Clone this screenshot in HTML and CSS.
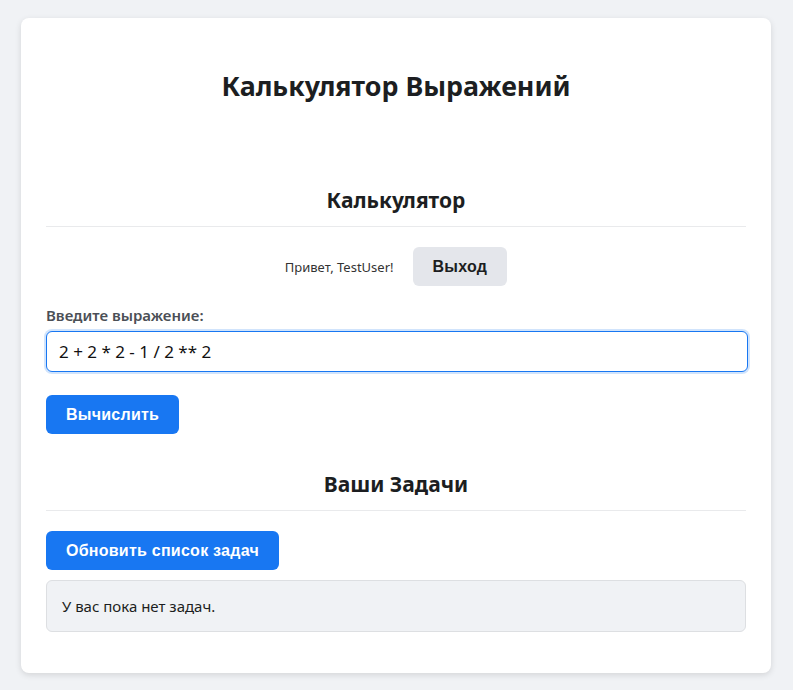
FILE: index.html
```html
<!DOCTYPE html>
<html lang="ru">
<head>
<meta charset="utf-8">
<title>Калькулятор Выражений</title>
<link rel="stylesheet" href="styles.css">
</head>
<body>
<div class="card">
  <h1 class="title">Калькулятор Выражений</h1>
  <section class="section">
    <h2 class="section-title">Калькулятор</h2>
    <div class="user-row">
      <span class="greeting">Привет, TestUser!</span>
      <button class="btn btn-secondary">Выход</button>
    </div>
    <label class="label" for="expr">Введите выражение:</label>
    <input id="expr" class="input" type="text" value="2 + 2 * 2 - 1 / 2 ** 2">
    <button class="btn btn-primary">Вычислить</button>
  </section>
  <section class="section">
    <h2 class="section-title">Ваши Задачи</h2>
    <button class="btn btn-primary">Обновить список задач</button>
    <div class="tasks">У вас пока нет задач.</div>
  </section>
</div>
</body>
</html>
```
FILE: styles.css
```css
* { box-sizing: border-box; }
html, body { margin: 0; padding: 0; }
body {
  background: #f0f2f5;
  font-family: "Noto Sans", "Open Sans", sans-serif;
  color: #1c1e21;
  padding: 18px 1px 18px 0;
}
.card {
  width: 750px;
  margin: 0 auto;
  background: #fff;
  border-radius: 8px;
  box-shadow: 0 2px 6px rgba(0,0,0,0.12);
  padding: 25px 25px 41px;
}
.title {
  font-size: 26.8px;
  font-weight: 700;
  text-align: center;
  margin: 25px 0 82px;
  line-height: 36px;
}
.section-title {
  font-size: 21px;
  font-weight: 700;
  text-align: center;
  margin: 0 0 20px;
  padding-bottom: 12px;
  line-height: 28px;
  border-bottom: 1px solid #e9eaec;
}
.user-row {
  display: flex;
  justify-content: center;
  align-items: center;
  gap: 19px;
  margin-bottom: 19px;
}
.greeting { font-size: 13px; color: #333; }
.btn {
  font-family: "Liberation Sans", Arial, sans-serif;
  font-weight: 700;
  font-size: 16px;
  letter-spacing: 0.25px;
  border: none;
  border-radius: 6px;
  padding: 0 20px;
  height: 39px;
  cursor: pointer;
}
.btn-secondary { background: #e4e6eb; color: #1c1e21; }
.btn-primary { background: #1877f2; color: #fff; }
.label {
  display: block;
  font-size: 15px;
  font-weight: 600;
  color: #4b4f56;
  margin-bottom: 6px;
}
.input {
  display: block;
  width: 702px;
  height: 41px;
  font-family: inherit;
  font-size: 17px;
  padding: 0 12px;
  border: 1px solid #1877f2;
  border-radius: 6px;
  box-shadow: 0 0 0 2px rgba(24,119,242,0.2);
  outline: none;
  color: #111;
  margin-bottom: 23px;
}
.section + .section { margin-top: 36px; }
.tasks {
  margin-top: 10px;
  background: #f0f2f5;
  border: 1px solid #dddfe2;
  border-radius: 6px;
  padding: 15px;
  font-size: 15px;
  line-height: 20px;
}
```
